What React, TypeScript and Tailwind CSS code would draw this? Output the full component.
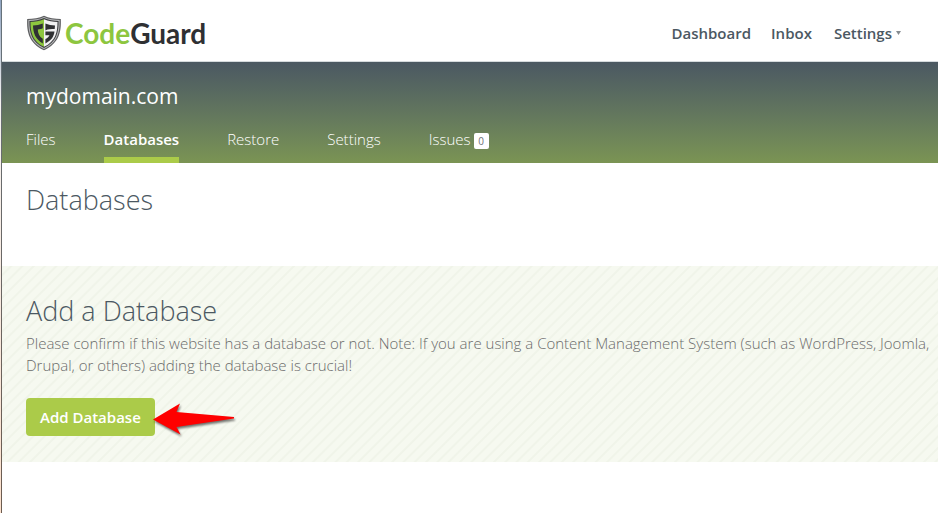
import React from 'react';

const SITE_TABS = [
  { label: 'Files', active: false },
  { label: 'Databases', active: true },
  { label: 'Restore', active: false },
  { label: 'Settings', active: false },
];

const ShieldLogo: React.FC = () => (
  <svg viewBox="0 0 36 36" className="w-9 h-9 shrink-0" aria-hidden="true">
    <path d="M18 .8C13.500 3.200 7 4 1.200 4 .6 17 3 28.500 18 35.200 33 28.500 35.400 17 34.800 4 29 4 22.500 3.200 18 .8z" fill="#5d5e60" />
    <path d="M18 2C13.500 4.200 8 5 2.400 5 2.100 17 4.300 27.700 18 34 31.700 27.700 33.900 17 33.600 5 28 5 22.500 4.200 18 2z" fill="#b9babc" />
    <path d="M18 3C13.500 5 8.500 5.800 3.400 5.900 3.300 17 5.300 27 18 32.900 30.700 27 32.700 17 32.600 5.900 27.500 5.800 22.500 5 18 3z" fill="#3c3d40" />
    <path d="M18 4.200C13.500 6 9 6.800 4.500 6.900 4.500 17 6.300 26.300 18 31.800z" fill="#8dc63f" />
    <path d="M18 4.200C22.500 6 27 6.800 31.500 6.900 31.500 17 29.700 26.300 18 31.800z" fill="#f1f1f2" />
    <path d="M16.800 8.500C13.500 9.800 10.500 10.300 7 10.400 7.200 17.800 9.300 24 16.800 28.400V23.800C13.200 21.500 12 18.400 11.800 14.400 14 14.200 15.500 13.800 16.800 13.200z" fill="#2f3033" />
    <path d="M19.400 8.500C22.500 9.800 25.500 10.300 29 10.400L28.700 14C25 14 22.200 14 19.400 15.400zM19.400 16.600H28.500C27.800 22.300 25.200 25.600 19.400 28.400V24C21.800 22.800 22.800 21.700 23.500 20.200H19.400z" fill="#2f3033" />
  </svg>
);

const PointerArrow: React.FC = () => (
  <svg viewBox="0 0 86 38" className="absolute left-full top-0 -ml-1 w-[86px] h-[38px] pointer-events-none drop-shadow-[1px_2px_1px_rgba(0,0,0,0.55)]" aria-hidden="true">
    <path d="M2 21.500 29 5.500 25.500 14 83 19V20.500L25.500 29 29.500 36.500z" fill="#fe0000" />
  </svg>
);

export default function App() {
  return (
    <div className="min-h-screen flex bg-white font-['Open_Sans',sans-serif] text-[#4b5862]">
      {/* Window edge */}
      <div className="w-0.5 shrink-0 flex">
        <div className="flex-1 bg-linear-to-b from-[#8fa3c0] via-[#f4f2f0] via-20% to-[#fbe0cc]" />
        <div className="flex-1 bg-linear-to-b from-[#66737c] to-[#6c5c50]" />
      </div>

      <div className="flex-1 min-w-0">
        {/* Top bar */}
        <header className="flex items-center justify-between border-b border-[#d5dadd] pl-6 pr-[37px] h-[62px]">
          <a href="#" className="flex items-center gap-[3px] pt-1 font-['Lato',sans-serif] font-bold text-[28px] leading-8">
            <ShieldLogo />
            <span className="text-[#2f3033]"><span className="text-[#8dc63f]">Code</span>Guard</span>
          </a>

          <nav className="flex items-center text-[15px] leading-5 font-semibold pt-1">
            <a href="#" className="mr-5">Dashboard</a>
            <a href="#" className="mr-[22px]">Inbox</a>
            <a href="#" className="flex items-center gap-1">
              Settings
              <svg viewBox="0 0 5 4" className="w-[5px] h-1" aria-hidden="true">
                <path d="M0 0h5L2.500 4z" fill="#868c91" />
              </svg>
            </a>
          </nav>
        </header>

        {/* Site banner */}
        <section className="bg-linear-to-b from-[#4b5862] to-[#7b9453] text-white px-6 pt-5">
          <h2 className="text-[21px] leading-7">mydomain.com</h2>
          <nav className="flex gap-12 mt-[19px] text-[15px] leading-5">
            {SITE_TABS.map(tab => (
              <a
                key={tab.label}
                href="#"
                className={tab.active ? 'font-semibold border-b-6 border-[#abcb49] pb-2' : 'font-light border-b-6 border-transparent pb-2'}
              >
                {tab.label}
              </a>
            ))}
            <a href="#" className="flex items-start gap-[3px] font-light">
              Issues
              <span className="mt-1 w-[15px] h-4 rounded-xs bg-white text-[#6b7075] text-[10px] leading-4 text-center font-normal">0</span>
            </a>
          </nav>
        </section>

        <main>
          <h1 className="px-6 pt-[17px] pb-[46px] text-[27px] leading-10 font-light">Databases</h1>

          {/* Add database panel */}
          <section className="px-6 pt-[25px] pb-[26px] bg-[#f6f9f0] bg-[repeating-linear-gradient(135deg,#f6f9f0_0px,#f6f9f0_5px,#f0f4e9_6px,#f0f4e9_7px,#f6f9f0_8px)]">
            <h2 className="text-[27px] leading-10 font-light">Add a Database</h2>
            <p className="mt-px -mr-4 text-[15px] leading-[22px] font-light text-[#6b6b6b]">
              Please confirm if this website has a database or not. Note: If you are using a Content Management System (such as WordPress, Joomla, Drupal, or others) adding the database is crucial!
            </p>
            <div className="relative inline-block mt-[22px] align-top">
              <button type="button" className="h-[38px] px-3.5 rounded-sm bg-[#abcb49] text-white text-[15px] font-semibold cursor-pointer">
                Add Database
              </button>
              <PointerArrow />
            </div>
          </section>
        </main>
      </div>
    </div>
  );
}
